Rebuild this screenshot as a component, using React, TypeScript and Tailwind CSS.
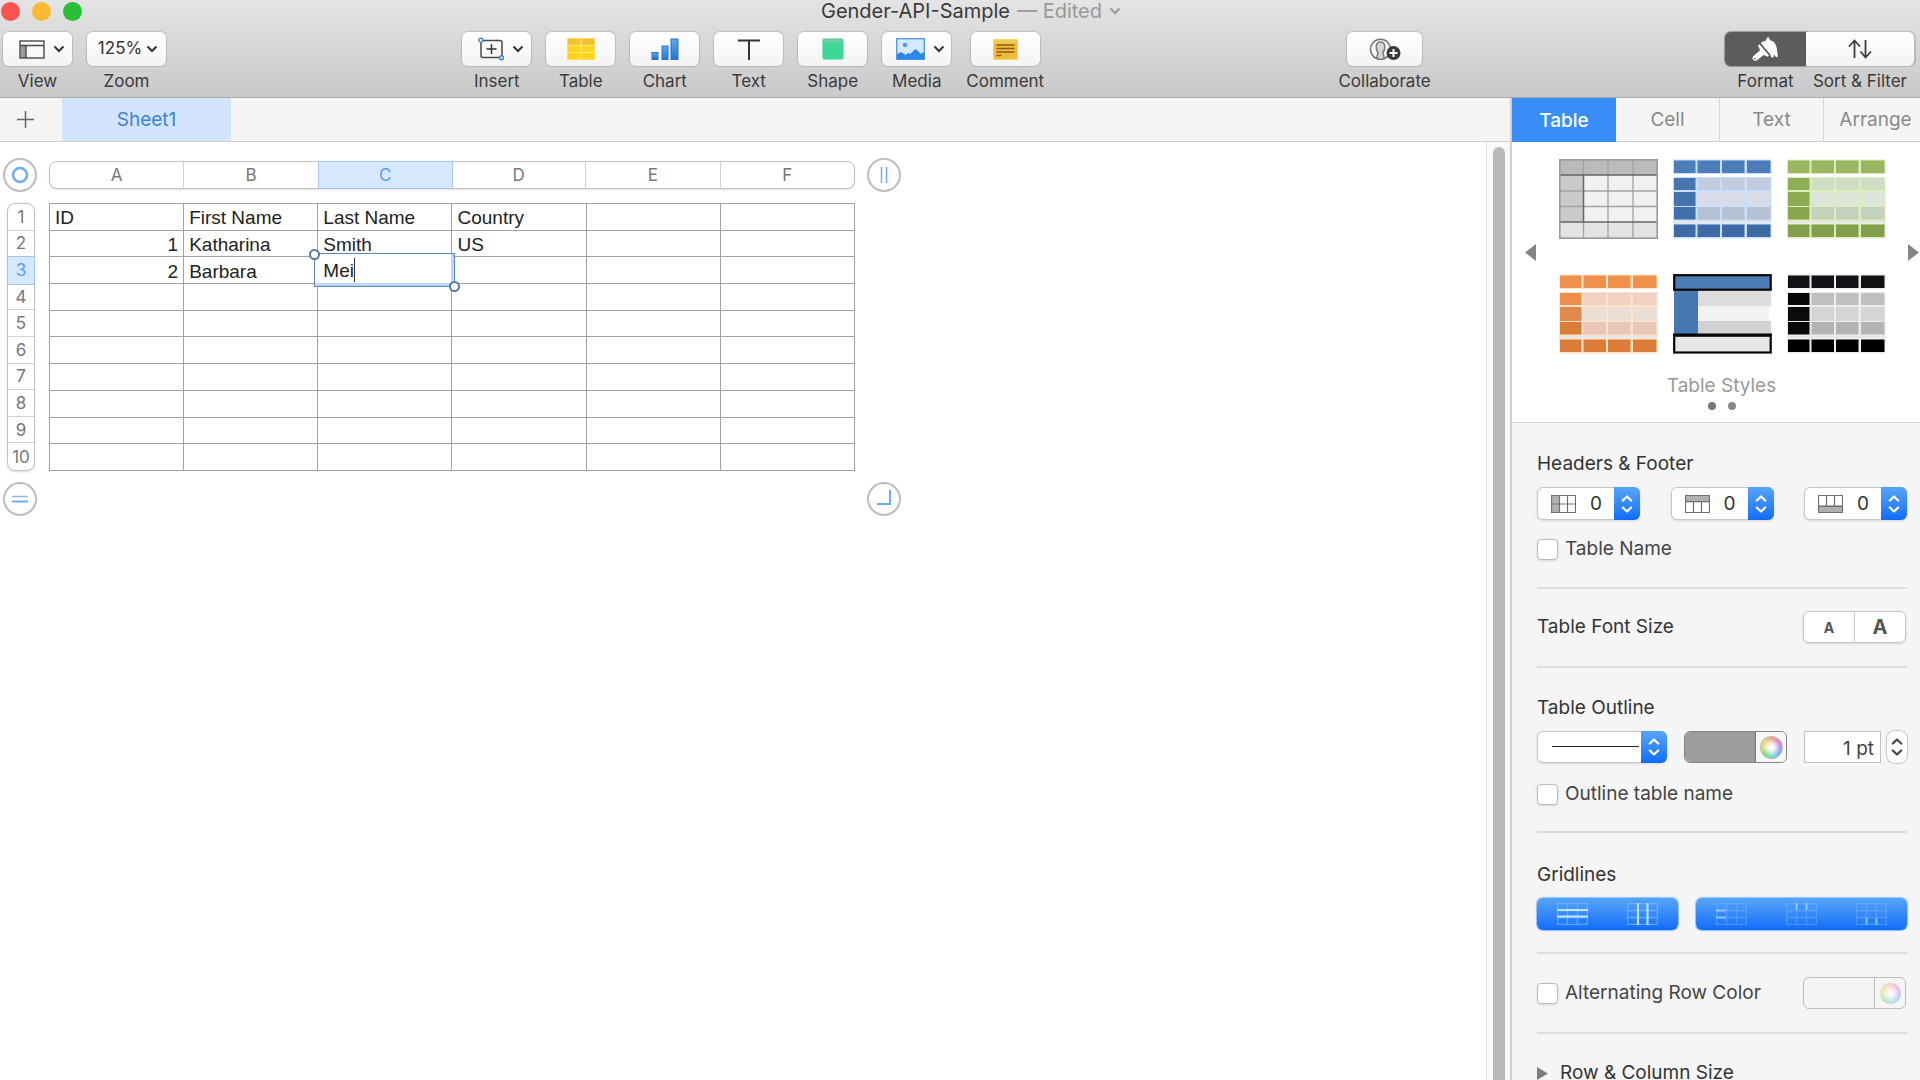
import React, { useState } from 'react';

type ThumbColors = { head: string; foot: string; side: string[]; body: string[]; halo: string };

const columns = ['A', 'B', 'C', 'D', 'E', 'F'];

const rows: string[][] = [
    ['ID', 'First Name', 'Last Name', 'Country', '', ''],
    ['1', 'Katharina', 'Smith', 'US', '', ''],
    ['2', 'Barbara', 'Mei', '', '', ''],
    ['', '', '', '', '', ''],
    ['', '', '', '', '', ''],
    ['', '', '', '', '', ''],
    ['', '', '', '', '', ''],
    ['', '', '', '', '', ''],
    ['', '', '', '', '', ''],
    ['', '', '', '', '', ''],
];

const blue: ThumbColors = { head: '#4d7db8', foot: '#3d6aa5', side: ['#4675b0', '#4373ad', '#3f70ab'], body: ['#c2ccde', '#d7dce8', '#b7c1d4'], halo: '#c9dffb' };
const green: ThumbColors = { head: '#98b760', foot: '#82a04b', side: ['#8fae58', '#8cab53', '#88a84e'], body: ['#ceddc4', '#dee6d9', '#c5d2bb'], halo: '#dbeebd' };
const orange: ThumbColors = { head: '#f0914b', foot: '#db7c38', side: ['#ee8f49', '#e08a4b', '#db7c38'], body: ['#f2d0c3', '#ecddd7', '#e8c6ba'], halo: '#fde3c8' };
const black: ThumbColors = { head: '#111216', foot: '#000000', side: ['#08080a', '#0b0b0c', '#08080a'], body: ['#bfbfbf', '#d5d5d5', '#b3b3b3'], halo: '#ededed' };

const Chevron = ({ className = '' }: { className?: string }) => (
    <svg width="12" height="8" viewBox="0 0 12 8" fill="none" stroke="currentColor" strokeWidth="2" className={className}>
        <path d="M1.5 1.5 6 6l4.5-4.5" />
    </svg>
);

const UpDown = () => (
    <svg width="12" height="18" viewBox="0 0 12 18" fill="none" stroke="currentColor" strokeWidth="2.2" strokeLinecap="round" strokeLinejoin="round">
        <path d="M1.800 5.500 6 1.500l4.200 4M1.800 12.500 6 16.500l4.200-4" />
    </svg>
);

const ViewIcon = () => (
    <svg width="26" height="19" viewBox="0 0 26 19" fill="none" stroke="#4a4a4a" strokeWidth="1.4">
        <rect x="1.5" y="5.5" width="5.5" height="12.5" fill="#9b9b9b" stroke="none" />
        <rect x="1" y="1" width="24" height="17" />
        <path d="M1 5.5h24M7 5.5V18" />
    </svg>
);

const InsertIcon = () => (
    <svg width="26" height="24" viewBox="0 0 26 24" fill="none">
        <rect x="3" y="3.5" width="21" height="17" rx="2" stroke="#4a4a4a" strokeWidth="1.5" />
        <path d="M13.500 7v10M8.500 12h10" stroke="#333" strokeWidth="1.5" />
        <circle cx="2.8" cy="3.2" r="2" fill="#fff" stroke="#3b87e0" strokeWidth="1.4" />
        <circle cx="23.6" cy="20.8" r="2" fill="#bfe0ff" stroke="#3b87e0" strokeWidth="1.4" />
    </svg>
);

const TableIcon = () => (
    <svg width="28" height="22" viewBox="0 0 28 22">
        <rect width="28" height="22" rx="1" fill="#fff07c" />
        <g fill="#ffd21f">
            <rect x="0.500" y="0.500" width="13" height="6.300" fill="#f1c232" />
            <rect x="14.500" y="0.500" width="13" height="6.300" fill="#f1c232" />
            <rect x="0.500" y="7.700" width="13" height="6.600" />
            <rect x="14.500" y="7.700" width="13" height="6.600" />
            <rect x="0.500" y="15.200" width="13" height="6.300" />
            <rect x="14.500" y="15.200" width="13" height="6.300" />
        </g>
    </svg>
);

const ChartIcon = () => (
    <svg width="28" height="22" viewBox="0 0 28 22" stroke="#2c6fc0" strokeWidth="1">
        <defs>
            <linearGradient id="bars" x1="0" y1="0" x2="0" y2="1">
                <stop offset="0" stopColor="#5cacea" />
                <stop offset="1" stopColor="#1c74e0" />
            </linearGradient>
        </defs>
        <rect x="1" y="14.5" width="6" height="7" fill="url(#bars)" />
        <rect x="11" y="8" width="6" height="13.5" fill="url(#bars)" />
        <rect x="20" y="1" width="7" height="20.5" fill="url(#bars)" />
    </svg>
);

const TextIcon = () => (
    <svg width="22" height="21" viewBox="0 0 22 21" fill="none" stroke="#333" strokeWidth="2">
        <path d="M0 1.5h22M11 1.5V21" />
    </svg>
);

const ShapeIcon = () => (
    <svg width="22" height="22" viewBox="0 0 22 22">
        <rect x="0.5" y="0.5" width="21" height="21" rx="2" fill="#3fd795" stroke="#8be8bf" />
        <path d="M1 5V2.500Q1 1 2.500 1h17Q21 1 21 2.500V5z" fill="#6cc9a2" />
    </svg>
);

const MediaIcon = () => (
    <svg width="29" height="22" viewBox="0 0 29 22">
        <rect x="0.700" y="0.700" width="27.600" height="20.600" fill="#d3e9fd" stroke="#5b97dc" strokeWidth="1.400" />
        <circle cx="9" cy="7" r="2.300" fill="#5b9be6" />
        <path d="M1 16.500 4.500 14l3 1.500 2 1.500L12 15l2 1 5.500-5 3 2.500 2 2.500 3.500-2v7.300H1z" fill="#2b86ec" />
    </svg>
);

const CommentIcon = () => (
    <svg width="25" height="21" viewBox="0 0 25 21">
        <rect x="0.500" y="0.500" width="24" height="20" rx="1" fill="#f3bd3b" stroke="#f5d46b" />
        <path d="M1 1h23v3.500H1z" fill="#eccb4c" />
        <path d="M3.500 6h18M3.500 9.500h18M3.500 13h18M3.500 16.500h5" stroke="#8a5a1e" strokeWidth="1.300" />
    </svg>
);

const CollaborateIcon = () => (
    <svg width="32" height="23" viewBox="0 0 32 23" fill="none">
        <circle cx="11.500" cy="11.300" r="10" stroke="#777" strokeWidth="1.500" />
        <path d="M8 20c-.3-2 .9-3.500 1-5.500C7.500 12.500 7 10 7.300 8c.4-2.700 2-4 4.200-4s3.800 1.300 4.200 4c.3 2-.2 4.500-1.700 6.500.1 2 1.300 3.500 1 5.500" fill="#d8d8d8" stroke="#777" strokeWidth="1.500" />
        <circle cx="24.500" cy="15" r="7" fill="#3a3a3a" />
        <path d="M24.500 11v8M20.500 15h8" stroke="#fff" strokeWidth="2" />
    </svg>
);

const BrushIcon = () => (
    <svg width="27" height="25" viewBox="0 0 27 25" fill="#fff">
        <path d="M8.800 6.300 11 4.300l2.200.3L15 .8c.8-.9 1.900-.6 2.300.4l.5 2c2.600.2 4.700 1.700 5.700 4.200 1.300 2.800 2 7 2.200 11.400.1 1.700-1.600 2-2.300.7l-1.400-2.300-.4 2.500c-.4 1.300-1.800 1.300-2.300.2l-1.200-2.700z" />
        <path d="M7.500 7.300 17 18.400l-1.500 1.400-2.300-1.200-1.400-.5-6.900 5.200c-2.500 1.700-5.700-1.300-3.900-3.900l7-6.200-.6-1.700-1.500-2.700z" />
        <path d="M8.300 6.600 17.500 17.400" stroke="#5c5c5c" strokeWidth="1" />
        <circle cx="2.900" cy="21.600" r=".9" fill="#5c5c5c" />
    </svg>
);

const SortIcon = () => (
    <svg width="24" height="20" viewBox="0 0 24 20" fill="none" stroke="#3d3d3d" strokeWidth="1.800">
        <path d="M6.500 19V2M1 7.500 6.500 1.500 12 7.500M17.500 1v17M12.500 12.500l5 6 5.500-6" />
    </svg>
);

type ToolProps = { label: string; children: React.ReactNode; width?: string; shape?: string };

const Tool = ({ label, children, width = 'w-[69px]', shape = 'rounded-md bg-linear-to-b from-white to-[#f3f3f3] text-[#333] shadow-[0_0_1px_1px_rgba(0,0,0,0.13)]' }: ToolProps) => (
    <label className="flex flex-col items-center gap-1">
        <button className={`${width} ${shape} flex h-[34px] items-center justify-center gap-2`}>{children}</button>
        <span className="text-[17px] leading-[22px] whitespace-nowrap text-[#3a3a3a]">{label}</span>
    </label>
);

const Handle = ({ label, children }: { label: string; children: React.ReactNode }) => (
    <button aria-label={label} className="flex size-[34px] items-center justify-center rounded-full border-2 border-[#bdbdbd] bg-white">
        <svg width="20" height="20" viewBox="0 0 20 20" fill="none" stroke="#6dabf3">{children}</svg>
    </button>
);

const xs = [1, 24.5, 49, 74];
const ws = [21.5, 22.5, 22.5, 23.5];
const bodyY = [19, 33, 48];
const bodyH = [12, 14, 12.5];

const ColorThumb = ({ c }: { c: ThumbColors }) => (
    <svg width="99" height="80" viewBox="0 0 99 80">
        <rect y="0.5" width="98.5" height="14.500" fill={c.halo} />
        <rect y="18" width="98.5" height="44" fill={c.halo} />
        <rect y="62" width="98.5" height="2.500" fill="#e6e6e6" />
        <rect y="64.500" width="98.5" height="15" fill={c.halo} />
        {xs.map((x, i) => (
            <g key={x}>
                <rect x={x} y="1.500" width={ws[i]} height="12.500" fill={c.head} />
                <rect x={x} y="65.500" width={ws[i]} height="12.500" fill={c.foot} />
                {bodyY.map((y, j) => (
                    <rect key={y} x={x} y={y} width={ws[i]} height={bodyH[j]} fill={i === 0 ? c.side[j] : c.body[j]} />
                ))}
            </g>
        ))}
    </svg>
);

const PlainThumb = () => (
    <svg width="99" height="80" viewBox="0 0 99 80">
        <rect width="99" height="80" fill="#f1f1f1" />
        <rect width="99" height="16" fill="#bababa" />
        <rect y="16" width="24" height="47" fill="#cacaca" />
        <rect y="63" width="99" height="17" fill="#e3e3e3" />
        <path d="M24.500 1v78M49 1v78M74 1v78M1 32h97M1 47.500h97" stroke="#a3a3a3" strokeWidth="1.300" />
        <path d="M0 16h99M0 63h99M24.500 16v47" stroke="#666" strokeWidth="1.400" />
        <rect x=".8" y=".8" width="97.400" height="78.400" fill="none" stroke="#9a9a9a" strokeWidth="1.600" />
    </svg>
);

const OutlineThumb = () => (
    <svg width="99" height="80" viewBox="0 0 99 80">
        <rect x="1" y="16" width="24" height="45" fill="#4777b1" />
        <rect x="25" y="16" width="73" height="16" fill="#dcdcdc" />
        <rect x="25" y="32" width="71" height="15" fill="#f1f1f1" />
        <rect x="25" y="47" width="73" height="14" fill="#d2d2d2" />
        <rect x="1.200" y="1.200" width="96.500" height="14.500" fill="#4d7db8" stroke="#050505" strokeWidth="2.200" />
        <rect x="1.200" y="61.500" width="96.500" height="17" fill="#e6e6e6" stroke="#050505" strokeWidth="2.200" />
        <path d="M0 61h99" stroke="#050505" strokeWidth="3" />
    </svg>
);

const HeaderColumnIcon = () => (
    <svg width="25" height="18" viewBox="0 0 25 18" stroke="#6f6f6f" fill="none">
        <rect x=".5" y=".5" width="8" height="17" fill="#b0b0b0" />
        <path d="M.5.500h24v17H.5zM8.500.500v17M16.500.500v17M.5 9h24" strokeWidth="1.200" />
    </svg>
);

const HeaderRowIcon = () => (
    <svg width="25" height="18" viewBox="0 0 25 18" stroke="#6f6f6f" fill="none">
        <rect x=".5" y=".5" width="24" height="6" fill="#b0b0b0" />
        <path d="M.5.500h24v17H.5zM8.500 7v10.500M16.500 7v10.500M.5 6.700h24" strokeWidth="1.200" />
    </svg>
);

const FooterRowIcon = () => (
    <svg width="25" height="18" viewBox="0 0 25 18" stroke="#6f6f6f" fill="none">
        <rect x=".5" y="11.500" width="24" height="6" fill="#b0b0b0" />
        <path d="M.5.500h24v17H.5zM8.500.500v10M16.500.500v10M.5 11h24" strokeWidth="1.200" />
    </svg>
);

const CountSelect = ({ label, children }: { label: string; children: React.ReactNode }) => (
    <div className="relative h-[33px] w-[103px]">
        <select aria-label={label} className="size-full appearance-none rounded-md border border-[#c6c6c6] bg-white pt-px pl-[52px] text-[19px] text-[#333] shadow-sm">
            <option>0</option>
            <option>1</option>
            <option>2</option>
        </select>
        <span className="pointer-events-none absolute inset-y-0 left-[14px] flex items-center">{children}</span>
        <span className="pointer-events-none absolute inset-y-0 right-0 flex w-[26px] items-center justify-center rounded-r-md bg-linear-to-b from-[#57a4f8] to-[#0f6cf8] text-white">
            <UpDown />
        </span>
    </div>
);

const Check = ({ label }: { label: string }) => (
    <label className="flex h-[21px] items-center gap-[7px] text-[19px] text-[#444]">
        <input type="checkbox" className="size-[21px] appearance-none rounded border border-[#bcbcbc] bg-white shadow-sm checked:bg-[#388df7]" />
        {label}
    </label>
);

const ColorWell = ({ label, fill, faded = false }: { label: string; fill: string; faded?: boolean }) => (
    <button aria-label={label} className={`flex h-8 w-[103px] overflow-hidden rounded-md border ${faded ? 'border-[#bdbdbd]' : 'border-[#858585]'}`}>
        <span className={`h-full flex-1 border-r ${faded ? 'border-[#bdbdbd]' : 'border-[#777]'} ${fill}`}></span>
        <span className={`flex h-full w-[30px] items-center justify-center ${faded ? '' : 'bg-[#f7f7f7]'}`}>
            <span className={`size-[21px] rounded-full bg-[radial-gradient(circle,#ffffff_15%,#ffffff00_75%),conic-gradient(#f08a6a,#d95fc8,#9a6ee0,#5ba6f0,#4fd0b8,#66cc55,#c8d850,#f0c050,#f08a6a)] ${faded ? 'opacity-50' : 'ring-1 ring-[#bbb]'}`}></span>
        </span>
    </button>
);

const GridIcon = ({ strong }: { strong: string }) => (
    <svg width="31" height="22" viewBox="0 0 31 22" fill="none">
        <path d="M.5.500h30v21H.5zM10.500.500v21M20.500.500v21M.5 7.500h30M.5 14.500h30" stroke="#75b6ff" strokeWidth="1.500" strokeOpacity=".75" />
        <path d={strong} stroke="#c2e6ff" strokeWidth="2" />
    </svg>
);

const Heading = ({ children }: { children: React.ReactNode }) => (
    <h2 className="mb-[13px] text-[19px] leading-5 text-[#333]">{children}</h2>
);

const App = () => {
    const [tab, setTab] = useState<string>('Table');
    const [selected] = useState<{ row: number; col: number }>({ row: 2, col: 2 });
    const [editing, setEditing] = useState<string>('Mei');

    return (
        <div className="flex h-screen flex-col overflow-hidden bg-white font-['Inter',sans-serif] text-[#333]">
            <header className="h-[98px] shrink-0 border-b border-[#a9a9a9] bg-linear-to-b from-[#e4e4e4] to-[#c9c9c9]">
                <div className="flex h-[22px] items-center pr-[60px]">
                    <div className="flex gap-3 pl-px">
                        <button aria-label="Close" className="size-[19px] rounded-full bg-[#fb5450]"></button>
                        <button aria-label="Minimize" className="size-[19px] rounded-full bg-[#fab932]"></button>
                        <button aria-label="Full screen" className="size-[19px] rounded-full bg-[#27c038]"></button>
                    </div>
                    <h1 className="flex flex-1 items-center justify-center gap-[7px] text-xl leading-[22px] text-[#3a3a3a]">
                        Gender-API-Sample
                        <span className="text-[#999]">— Edited</span>
                        <Chevron className="text-[#999]" />
                    </h1>
                </div>
                <div className="flex justify-between pt-[10px] pr-[6px] pl-[3px]">
                    <div className="flex gap-[15px]">
                        <Tool label="View"><span className="flex items-center gap-2 pl-2"><ViewIcon /><Chevron /></span></Tool>
                        <Tool label="Zoom" width="w-[79px]">
                            <span className="flex items-center gap-1 pl-[3px] text-[17px]">125%<Chevron /></span>
                        </Tool>
                    </div>
                    <div className="flex gap-[15px] pl-[2px]">
                        <Tool label="Insert"><span className="flex items-center gap-2 pl-2"><InsertIcon /><Chevron /></span></Tool>
                        <Tool label="Table"><TableIcon /></Tool>
                        <Tool label="Chart"><ChartIcon /></Tool>
                        <Tool label="Text"><TextIcon /></Tool>
                        <Tool label="Shape"><ShapeIcon /></Tool>
                        <Tool label="Media"><span className="flex items-center gap-2 pl-2"><MediaIcon /><Chevron /></span></Tool>
                        <Tool label="Comment"><CommentIcon /></Tool>
                    </div>
                    <Tool label="Collaborate" width="w-[75px]"><CollaborateIcon /></Tool>
                    <div className="flex">
                        <Tool label="Format" width="w-[81px]" shape="rounded-l-md bg-[#5c5c5c] shadow-[0_0_1px_1px_rgba(0,0,0,0.3)]"><BrushIcon /></Tool>
                        <Tool label="Sort & Filter" width="w-[108px]" shape="rounded-r-md bg-linear-to-b from-white to-[#f3f3f3] shadow-[1px_0_1px_1px_rgba(0,0,0,0.13)]"><SortIcon /></Tool>
                    </div>
                </div>
            </header>

            <div className="flex min-h-0 flex-1">
                <main className="flex min-w-0 flex-1 flex-col">
                    <nav className="flex h-11 shrink-0 border-b border-[#cfcfcf] bg-[#f4f4f4]">
                        <button aria-label="Add sheet" className="flex w-[62px] items-center pl-[17px]">
                            <svg width="17" height="17" viewBox="0 0 17 17" stroke="#666" strokeWidth="1.500"><path d="M8.500 0v17M0 8.500h17" /></svg>
                        </button>
                        <button className="w-[169px] bg-[#d2e5fd] pt-[2px] text-[19px] text-[#3f82d6]">Sheet1</button>
                    </nav>
                    <div className="flex min-h-0 flex-1">
                        <div className="min-w-0 flex-1 overflow-hidden pt-4 pl-[3px]">
                            <div className="grid grid-cols-[34px_806px_34px] gap-x-3 gap-y-[11px]">
                                <Handle label="Select table"><circle cx="10" cy="10" r="7" strokeWidth="2.500" /></Handle>
                                <div className="flex h-7 self-center rounded-lg border border-[#c2c2c2] bg-white shadow-sm">
                                    {columns.map((col, i) => (
                                        <button
                                            key={col}
                                            className={`flex-1 pt-px text-[17px] ${i === selected.col ? 'bg-[#d5e8fe] text-[#5a9ff0] ring-1 ring-[#a9c4e6]' : 'border-[#d0d0d0] text-[#777] not-last:border-r'}`}
                                        >
                                            {col}
                                        </button>
                                    ))}
                                </div>
                                <Handle label="Add column"><path d="M7.500 2v16M12.500 2v16" strokeWidth="1.500" /></Handle>

                                <div className="ml-1 grid w-7 grid-rows-10 rounded-lg border border-[#c2c2c2] bg-white shadow-sm">
                                    {rows.map((_, i) => (
                                        <button
                                            key={i}
                                            className={`text-[17px] leading-5 ${i === selected.row ? 'bg-[#d5e8fe] text-[#5a9ff0] ring-1 ring-[#a9c4e6]' : 'border-[#d0d0d0] text-[#777] not-last:border-b'}`}
                                        >
                                            {i + 1}
                                        </button>
                                    ))}
                                </div>
                                <table className="h-[268px] w-full table-fixed border-collapse font-['Liberation_Sans',Arial,sans-serif] text-[19px] leading-5 text-[#222]">
                                    <tbody>
                                        {rows.map((row, r) => (
                                            <tr key={r} className="h-[26px]">
                                                {row.map((value, c) => (
                                                    <td key={c} className={`relative border border-[#a3a3a3] px-[5px] pt-[3px] pb-0 ${c === 0 && r > 0 ? 'text-right' : ''}`}>
                                                        {r === selected.row && c === selected.col ? (
                                                            <div className="absolute -inset-1 flex border border-[#5b86bd] bg-white shadow-[inset_-3px_-3px_0_#bdd7f6]">
                                                                <input
                                                                    aria-label="Cell C3"
                                                                    value={editing}
                                                                    onChange={(e) => setEditing(e.target.value)}
                                                                    className="field-sizing-content bg-transparent pt-px pl-2 outline-none"
                                                                />
                                                                <span className="my-1 w-px bg-[#333]"></span>
                                                                <span className="absolute -top-[5px] -left-[6px] size-[11px] rounded-full border-2 border-[#56799f] bg-white"></span>
                                                                <span className="absolute -right-[6px] -bottom-[6px] size-[11px] rounded-full border-2 border-[#56799f] bg-white"></span>
                                                            </div>
                                                        ) : value}
                                                    </td>
                                                ))}
                                            </tr>
                                        ))}
                                    </tbody>
                                </table>
                                <span></span>

                                <Handle label="Add row">
                                    <path d="M2 7.500h16" stroke="#9fb4cc" strokeWidth="1.500" />
                                    <path d="M2 12.500h16" strokeWidth="2" />
                                </Handle>
                                <span></span>
                                <Handle label="Resize table"><path d="M3 15h13V1" strokeWidth="2" /></Handle>
                            </div>
                        </div>
                        <div className="flex w-6 justify-center border-l border-[#e2e2e2] bg-[#fafafa] pt-[5px]">
                            <div className="w-3 rounded-t-full bg-[#b9b9b9]"></div>
                        </div>
                    </div>
                </main>

                <aside className="flex w-[410px] shrink-0 flex-col overflow-hidden border-l-2 border-[#cfcfcf] bg-[#f5f5f5]">
                    <nav className="flex h-11 shrink-0 border-b border-[#cfcfcf] bg-[#f5f5f5]">
                        {['Table', 'Cell', 'Text', 'Arrange'].map((name) => (
                            <button
                                key={name}
                                onClick={() => setTab(name)}
                                className={`w-[104px] shrink-0 pt-[2px] text-[19px] ${tab === name ? '-mb-px bg-[#388df7] font-medium text-white' : 'border-r border-[#d5d5d5] text-[#8a8a8a]'}`}
                            >
                                {name}
                            </button>
                        ))}
                    </nav>

                    <section className="flex h-[281px] shrink-0 flex-col items-center border-b border-[#d5d5d5] bg-white pt-[17px]">
                        <div className="flex w-full items-center justify-between pr-px pl-[13px]">
                            <button aria-label="Previous styles" className="mb-2">
                                <svg width="11" height="17" viewBox="0 0 11 17" fill="#858585"><path d="M11 0v17L0 8.500z" /></svg>
                            </button>
                            <div className="grid grid-cols-3 gap-x-[15px] gap-y-[35px]">
                                <button aria-label="Plain style"><PlainThumb /></button>
                                <button aria-label="Blue style"><ColorThumb c={blue} /></button>
                                <button aria-label="Green style"><ColorThumb c={green} /></button>
                                <button aria-label="Orange style"><ColorThumb c={orange} /></button>
                                <button aria-label="Outlined style"><OutlineThumb /></button>
                                <button aria-label="Black style"><ColorThumb c={black} /></button>
                            </div>
                            <button aria-label="Next styles" className="mb-2">
                                <svg width="11" height="17" viewBox="0 0 11 17" fill="#858585"><path d="M0 0v17l11-8.500z" /></svg>
                            </button>
                        </div>
                        <p className="mt-[22px] pl-[11px] text-[19px] leading-5 text-[#999]">Table Styles</p>
                        <div className="mt-[6px] flex gap-3 pl-[11px]">
                            <span className="size-2 rounded-full bg-[#777]"></span>
                            <span className="size-2 rounded-full bg-[#8a8a8a]"></span>
                        </div>
                    </section>

                    <div className="mr-[13px] ml-[25px] divide-y-2 divide-[#dedede]">
                        <section className="pt-[31px] pb-[27px]">
                            <Heading>Headers &amp; Footer</Heading>
                            <div className="flex justify-between">
                                <CountSelect label="Header columns"><HeaderColumnIcon /></CountSelect>
                                <CountSelect label="Header rows"><HeaderRowIcon /></CountSelect>
                                <CountSelect label="Footer rows"><FooterRowIcon /></CountSelect>
                            </div>
                            <div className="mt-[19px]"><Check label="Table Name" /></div>
                        </section>

                        <section className="flex items-center justify-between pt-[22px] pb-[23px]">
                            <h2 className="text-[19px] leading-5">Table Font Size</h2>
                            <div className="mr-px flex h-8 w-[103px] divide-x divide-[#ccc] rounded-md border border-[#c6c6c6] bg-white font-bold text-[#555] shadow-sm">
                                <button aria-label="Smaller" className="flex-1 pt-[2px] text-sm">A</button>
                                <button aria-label="Larger" className="flex-1 text-xl leading-5">A</button>
                            </div>
                        </section>

                        <section className="pt-[30px] pb-[26px]">
                            <Heading>Table Outline</Heading>
                            <div className="flex items-center justify-between">
                                <div className="relative h-8 w-[130px]">
                                    <select aria-label="Outline style" className="size-full appearance-none rounded-md border border-[#c6c6c6] bg-white shadow-sm">
                                        <option></option>
                                    </select>
                                    <span className="pointer-events-none absolute top-[15px] right-7 left-[15px] h-px bg-[#222]"></span>
                                    <span className="pointer-events-none absolute inset-y-0 right-0 flex w-[26px] items-center justify-center rounded-r-md bg-linear-to-b from-[#57a4f8] to-[#0f6cf8] text-white">
                                        <UpDown />
                                    </span>
                                </div>
                                <ColorWell label="Outline color" fill="bg-[#9d9d9d]" />
                                <div className="flex gap-[6px]">
                                    <input aria-label="Outline width" defaultValue="1 pt" className="h-8 w-[77px] border border-[#c2c2c2] bg-white pt-[2px] pr-[6px] text-right text-[19px] text-[#444]" />
                                    <button aria-label="Change width" className="flex h-8 w-5 items-center justify-center rounded-lg bg-white text-[#444] shadow-[0_0_1px_1px_rgba(0,0,0,0.2)]">
                                        <UpDown />
                                    </button>
                                </div>
                            </div>
                            <div className="mt-[21px]"><Check label="Outline table name" /></div>
                        </section>

                        <section className="pt-[32px] pb-[22px]">
                            <Heading>Gridlines</Heading>
                            <div className="flex justify-between text-white">
                                <div className="flex h-8 w-[141px] rounded-md bg-linear-to-b from-[#57a4f8] to-[#0f6cf8] shadow-[0_0_1px_1px_#8cc0ff]">
                                    <button aria-label="Body rows" className="flex flex-1 items-center justify-center"><GridIcon strong="M0 7h31M0 13.500h31" /></button>
                                    <button aria-label="Body columns" className="flex flex-1 items-center justify-center"><GridIcon strong="M11 0v22M20.500 0v22" /></button>
                                </div>
                                <div className="flex h-8 w-[211px] rounded-md bg-linear-to-b from-[#57a4f8] to-[#0f6cf8] shadow-[0_0_1px_1px_#8cc0ff]">
                                    <button aria-label="Header column lines" className="flex flex-1 items-center justify-center opacity-60"><GridIcon strong="M0 7.500h10M0 14.500h10" /></button>
                                    <button aria-label="Header row lines" className="flex flex-1 items-center justify-center opacity-60"><GridIcon strong="M10.500 0v7M20.500 0v7" /></button>
                                    <button aria-label="Footer row lines" className="flex flex-1 items-center justify-center opacity-60"><GridIcon strong="M10.500 15v7M20.500 15v7" /></button>
                                </div>
                            </div>
                        </section>

                        <section className="flex items-center justify-between py-[23px] pr-px">
                            <Check label="Alternating Row Color" />
                            <ColorWell label="Row color" fill="" faded />
                        </section>

                        <section className="pt-[29px]">
                            <button className="flex items-center gap-3 text-[19px] leading-5">
                                <svg width="11" height="13" viewBox="0 0 11 13" fill="#7d7d7d"><path d="M0 0v13l11-6.500z" /></svg>
                                Row &amp; Column Size
                            </button>
                        </section>
                    </div>
                </aside>
            </div>
        </div>
    );
};

export default App;
